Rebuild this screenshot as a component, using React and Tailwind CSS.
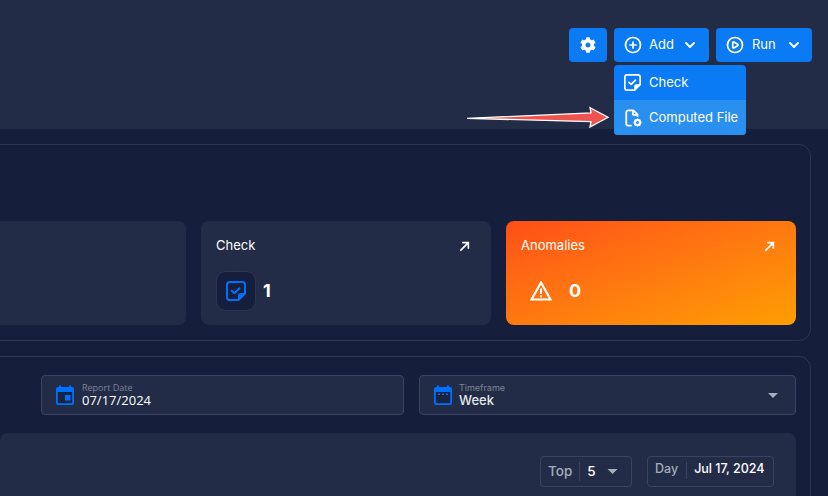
import { ChevronDown, CirclePlay, CirclePlus } from 'lucide-react'
import { FaCog } from 'react-icons/fa'

function NoteCheck({ className }) {
  return (
    <svg viewBox="0 0 20 20" fill="none" className={className}>
      <path d="M12.500 19H3.500A2.500 2.500 0 0 1 1 16.500v-13A2.500 2.500 0 0 1 3.500 1h13A2.500 2.500 0 0 1 19 3.500v9L12.500 19Z" stroke="currentColor" strokeWidth="2" strokeLinejoin="round" />
      <path d="M12 19.500v-5a2.500 2.500 0 0 1 2.500-2.500h5Z" fill="currentColor" />
      <path d="m5.800 9.800 2.700 2.500 5-5" stroke="currentColor" strokeWidth="2" strokeLinecap="round" strokeLinejoin="round" />
    </svg>
  )
}

function FileCog({ className }) {
  return (
    <svg viewBox="0 0 20 20" fill="none" className={className}>
      <path d="M8.500 18.500H5A2.500 2.500 0 0 1 2.500 16V4A2.500 2.500 0 0 1 5 1.500h5.500L15 6v3" stroke="currentColor" strokeWidth="2" strokeLinejoin="round" />
      <path d="M10 1.500V6.500H15" stroke="currentColor" strokeWidth="2" strokeLinejoin="round" />
      <circle cx="15" cy="15" r="2.800" stroke="currentColor" strokeWidth="2.200" />
      <path d="M15 10.500v2M15 17.500v2M10.500 15h2M17.500 15h2M11.800 11.800l1.400 1.400M16.800 16.800l1.400 1.400M18.200 11.800l-1.400 1.400M13.200 16.800l-1.400 1.400" stroke="currentColor" strokeWidth="1.600" />
    </svg>
  )
}

function UpRight() {
  return (
    <svg viewBox="0 0 12 12" fill="none" stroke="currentColor" strokeWidth="1.800" className="w-[11px] h-[11px] text-white">
      <path d="M1.500 10.500 10 2M3.500 1.800h6.700v6.700" />
    </svg>
  )
}

function Warning() {
  return (
    <svg viewBox="0 0 22 20" className="w-[22px] h-5 text-white">
      <path d="M11 1.500 20.500 18.500H1.500Z" fill="none" stroke="currentColor" strokeWidth="2.200" strokeLinejoin="miter" />
      <path d="M10 7.500h2v5.500h-2zM10 14.300h2v2h-2z" fill="currentColor" />
    </svg>
  )
}

function Calendar({ week }) {
  return (
    <svg viewBox="0 0 18 20" className="w-[18px] h-5 text-[#0070ff] shrink-0">
      <path d="M3 0.500h2V2h8V0.500h2V2h1a2 2 0 0 1 2 2v14a2 2 0 0 1-2 2H2a2 2 0 0 1-2-2V4a2 2 0 0 1 2-2h1Z" fill="currentColor" />
      <rect x="1.800" y="7" width="14.400" height="11.200" fill="#19223f" />
      {week ? (
        <path d="M4 8.500h2v1.500H4zM8 8.500h2v1.500H8zM12 8.500h2v1.500h-2z" fill="currentColor" />
      ) : (
        <rect x="9" y="10" width="5.500" height="5.500" fill="currentColor" />
      )}
    </svg>
  )
}

function Caret({ className }) {
  return (
    <svg viewBox="0 0 12 6" className={className}>
      <path d="M0 0h12L6 6Z" fill="currentColor" />
    </svg>
  )
}

function StatCard({ title, children, className }) {
  return (
    <div className={`w-[290px] h-[104px] rounded-lg px-[15px] pt-[16px] shrink-0 ${className}`}>
      <div className="flex items-center justify-between pr-[6px] h-[18px]">
        <span className="text-[13px] text-white">{title}</span>
        <UpRight />
      </div>
      <div className="flex items-center mt-[16px] h-10">{children}</div>
    </div>
  )
}

export default function App() {
  return (
    <div className="relative w-[828px] h-[496px] overflow-hidden bg-[#151f3b] font-['Inter',sans-serif]">
      {/* Top bar */}
      <div className="relative h-[129px] bg-[#222c47] flex justify-end gap-[7px] pt-7 pr-4">
        <button className="w-[38px] h-[34px] rounded bg-[#0a7af5] text-white flex items-center justify-center">
          <FaCog className="w-4 h-4" />
        </button>
        <div className="relative">
          <button className="w-[95px] h-[34px] rounded bg-[#0a7af5] text-white text-[13px] flex items-center pl-[10px]">
            <CirclePlus className="w-[18px] h-[18px]" strokeWidth={2.300} />
            <span className="ml-[7px]">Add</span>
            <ChevronDown className="w-4 h-4 ml-[8px]" strokeWidth={2.800} />
          </button>
          <div className="absolute left-0 top-[37px] w-[132px] rounded overflow-hidden bg-[#0a7af5] text-white text-[13px] z-10">
            <div className="h-[35px] flex items-center pl-[10px] gap-[8px]">
              <NoteCheck className="w-[17px] h-[17px]" />
              Check
            </div>
            <div className="h-[35px] flex items-center pl-[10px] gap-[7px] bg-[#2a90f0]">
              <FileCog className="w-[18px] h-[18px]" />
              Computed File
            </div>
          </div>
          <svg viewBox="0 0 146 24" className="absolute left-[-150px] top-[76px] w-[146px] h-6">
            <path d="M3 14.300 127 9 126 3.700 144 13.300 126 23 127 17.700Z" fill="#ef5350" stroke="#fff" strokeWidth="1.300" strokeLinejoin="miter" />
          </svg>
        </div>
        <button className="w-[96px] h-[34px] rounded bg-[#0a7af5] text-white text-[13px] flex items-center pl-[10px]">
          <CirclePlay className="w-[18px] h-[18px]" strokeWidth={2.300} />
          <span className="ml-[8px]">Run</span>
          <ChevronDown className="w-4 h-4 ml-[10px]" strokeWidth={2.800} />
        </button>
      </div>

      {/* Overview panel */}
      <div className="ml-[-20px] mr-[17px] mt-[15px] h-[197px] rounded-xl border border-[#2c3651] flex justify-end items-end gap-[15px] pr-[14px] pb-[15px]">
        <div className="flex-1 h-[104px] rounded-lg bg-[#222c47]" />
        <StatCard title="Check" className="bg-[#222c47]">
          <div className="w-10 h-10 rounded-[10px] bg-[#151f3b] border border-[#2c3651] flex items-center justify-center">
            <NoteCheck className="w-5 h-5 text-[#0070ff]" />
          </div>
          <span className="ml-[7px] text-lg font-bold text-white">1</span>
        </StatCard>
        <StatCard title="Anomalies" className="bg-gradient-to-br from-[#ff4d17] to-[#ff9d00]">
          <span className="ml-[9px]"><Warning /></span>
          <span className="ml-[17px] text-lg font-bold text-white">0</span>
        </StatCard>
      </div>

      {/* Charts panel */}
      <div className="ml-[-20px] mr-[17px] mt-[15px] h-[200px] rounded-xl border border-[#2c3651] pr-[14px] pt-[18px]">
        <div className="flex justify-end gap-[15px]">
          <div className="w-[363px] h-10 rounded bg-[#222c47] border border-[#3a4460] flex items-center pl-[14px] gap-[8px]">
            <Calendar />
            <div className="flex flex-col font-['Open_Sans',sans-serif]">
              <span className="text-[9px] leading-[11px] text-[#7d8494]">Report Date</span>
              <span className="text-[13px] leading-[15px] text-white">07/17/2024</span>
            </div>
          </div>
          <div className="w-[377px] h-10 rounded bg-[#222c47] border border-[#3a4460] flex items-center pl-[14px] pr-[17px] gap-[7px]">
            <Calendar week />
            <div className="flex flex-col flex-1">
              <span className="text-[9px] leading-[11px] text-[#7d8494]">Timeframe</span>
              <span className="text-[13px] leading-[15px] font-medium text-[#e3e6ec]">Week</span>
            </div>
            <Caret className="w-[10px] h-[5px] text-[#a6acb9]" />
          </div>
        </div>
        <div className="mt-[18px] ml-[19px] h-[120px] rounded-lg bg-[#222c47] flex justify-end gap-[15px] pr-[22px] pt-[23px]">
          <div className="w-[92px] h-[31px] rounded border border-[#3a4460] flex items-center pl-[7px] text-[13.500px] font-medium">
            <span className="text-[#a6acb9]">Top</span>
            <span className="w-px h-[19px] bg-[#3a4460] ml-[7px]" />
            <span className="ml-[7px] text-white">5</span>
            <Caret className="w-[11px] h-[5px] text-[#a6acb9] ml-[11px]" />
          </div>
          <div className="w-[127px] h-[31px] rounded border border-[#3a4460] flex items-start pt-[3px] pl-[7px] text-[12.500px] font-medium">
            <span className="text-[#a6acb9]">Day</span>
            <span className="w-px h-[17px] bg-[#3a4460] ml-2 mt-[2px]" />
            <span className="ml-[7px] text-white">Jul 17, 2024</span>
          </div>
        </div>
      </div>
    </div>
  )
}
